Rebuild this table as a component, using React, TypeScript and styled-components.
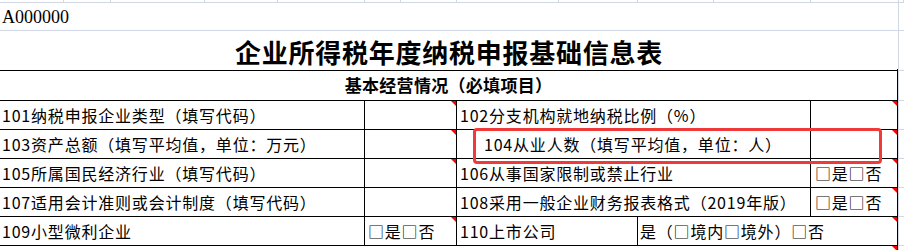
import React from 'react';
import styled, { createGlobalStyle, css } from 'styled-components';

const GRID = '#d0d7e5';
const INK = '#000';

const GlobalStyle = createGlobalStyle`
  html, body { margin: 0; padding: 0; background: #fff; }
  body {
    font-family: "Noto Sans CJK SC", "Noto Sans", sans-serif;
    color: #000;
    overflow: hidden;
  }
  * { box-sizing: border-box; }
`;

const Sheet = styled.div`
  width: 904px;
  position: relative;
`;

const Strip = styled.div`
  display: grid;
  grid-template-columns: 64px 47px 94px 73px 87px 36px 56px 102px 79px 76px 97px 88px 1fr;
  height: 3px;
`;

const StripCell = styled.div`
  border-right: 1px solid ${GRID};
  border-bottom: 1px solid ${GRID};
`;

const SheetRow = styled.div<{ $h: number }>`
  display: grid;
  grid-template-columns: 898px 1fr;
  height: ${(p) => p.$h}px;
`;

const Gutter = styled.div`
  border-left: 1px solid ${GRID};
  border-bottom: 1px solid ${GRID};
`;

const CodeCell = styled.div`
  border-bottom: 1px solid ${GRID};
  display: flex;
  align-items: center;
  padding: 1px 0 0 2px;
  font-family: "Liberation Serif", serif;
  font-size: 18px;
`;

const TitleCell = styled.div`
  border-bottom: 1px solid ${INK};
  display: flex;
  align-items: center;
  justify-content: center;
  padding-top: 2px;
  font-size: 26px;
  font-weight: 700;
  letter-spacing: 0.75px;
`;

const SectionCell = styled.div`
  border-bottom: 1px solid ${INK};
  border-right: 1px solid ${INK};
  display: flex;
  align-items: center;
  justify-content: center;
  font-size: 17px;
  font-weight: 700;
  letter-spacing: 0.3px;
`;

const Cells = styled.div<{ $cols: string }>`
  display: grid;
  grid-template-columns: ${(p) => p.$cols};
`;

const Cell = styled.div<{ $note?: boolean; $pad?: number; $open?: boolean }>`
  position: relative;
  border-right: 1px solid ${INK};
  border-bottom: ${(p) => (p.$open ? 'none' : `1px solid ${INK}`)};
  display: flex;
  align-items: center;
  padding-left: ${(p) => p.$pad ?? 3}px;
  font-size: 16px;
  letter-spacing: 0.8px;
  white-space: nowrap;
  overflow: hidden;
  ${(p) =>
    p.$note &&
    css`
      &::after {
        content: '';
        position: absolute;
        top: 0;
        right: 0;
        width: 0;
        height: 0;
        border-top: 5px solid #ff0000;
        border-left: 5px solid transparent;
      }
    `}
`;

const Highlight = styled.div`
  position: absolute;
  left: 473px;
  top: 128px;
  width: 409px;
  height: 36px;
  border: 3px solid #f03a3a;
  border-radius: 4px;
  pointer-events: none;
`;

type CellDef = { text?: string; note?: boolean; pad?: number };
type RowDef = { cols: string; cells: CellDef[] };

const FOUR = '365px 92px 354px 87px';
const SPLIT = '365px 92px 181px 260px';
const YN = '□是□否';

const rows: RowDef[] = [
  {
    cols: FOUR,
    cells: [
      { text: '101纳税申报企业类型（填写代码）', pad: 2 },
      { note: true },
      { text: '102分支机构就地纳税比例（%）' },
      { note: true },
    ],
  },
  {
    cols: FOUR,
    cells: [
      { text: '103资产总额（填写平均值，单位：万元）', pad: 2 },
      { note: true },
      { text: '104从业人数（填写平均值，单位：人）', pad: 27 },
      { note: true },
    ],
  },
  {
    cols: FOUR,
    cells: [
      { text: '105所属国民经济行业（填写代码）', pad: 2 },
      { note: true },
      { text: '106从事国家限制或禁止行业' },
      { text: YN, note: true, pad: 4 },
    ],
  },
  {
    cols: FOUR,
    cells: [
      { text: '107适用会计准则或会计制度（填写代码）', pad: 2 },
      {},
      { text: '108采用一般企业财务报表格式（2019年版）' },
      { text: YN, note: true, pad: 4 },
    ],
  },
  {
    cols: SPLIT,
    cells: [
      { text: '109小型微利企业', pad: 2 },
      { text: YN, note: true, pad: 3 },
      { text: '110上市公司' },
      { text: '是（□境内□境外）□否', note: true, pad: 2 },
    ],
  },
];

export default function App() {
  const stripCols = Array.from({ length: 13 });
  return (
    <>
      <GlobalStyle />
      <Sheet>
        <Strip>
          {stripCols.map((_, i) => (
            <StripCell key={i} />
          ))}
        </Strip>
        <SheetRow $h={28}>
          <CodeCell>A000000</CodeCell>
          <Gutter />
        </SheetRow>
        <SheetRow $h={38}>
          <TitleCell>企业所得税年度纳税申报基础信息表</TitleCell>
          <Gutter />
        </SheetRow>
        <SheetRow $h={32}>
          <SectionCell>基本经营情况（必填项目）</SectionCell>
          <Gutter />
        </SheetRow>
        {rows.map((r, i) => (
          <SheetRow $h={29} key={i}>
            <Cells $cols={r.cols}>
              {r.cells.map((c, j) => (
                <Cell key={j} $note={c.note} $pad={c.pad}>
                  {c.text}
                </Cell>
              ))}
            </Cells>
            <Gutter />
          </SheetRow>
        ))}
        <SheetRow $h={12}>
          <Cells $cols="898px">
            <Cell $note $open />
          </Cells>
          <Gutter />
        </SheetRow>
        <Highlight />
      </Sheet>
    </>
  );
}
